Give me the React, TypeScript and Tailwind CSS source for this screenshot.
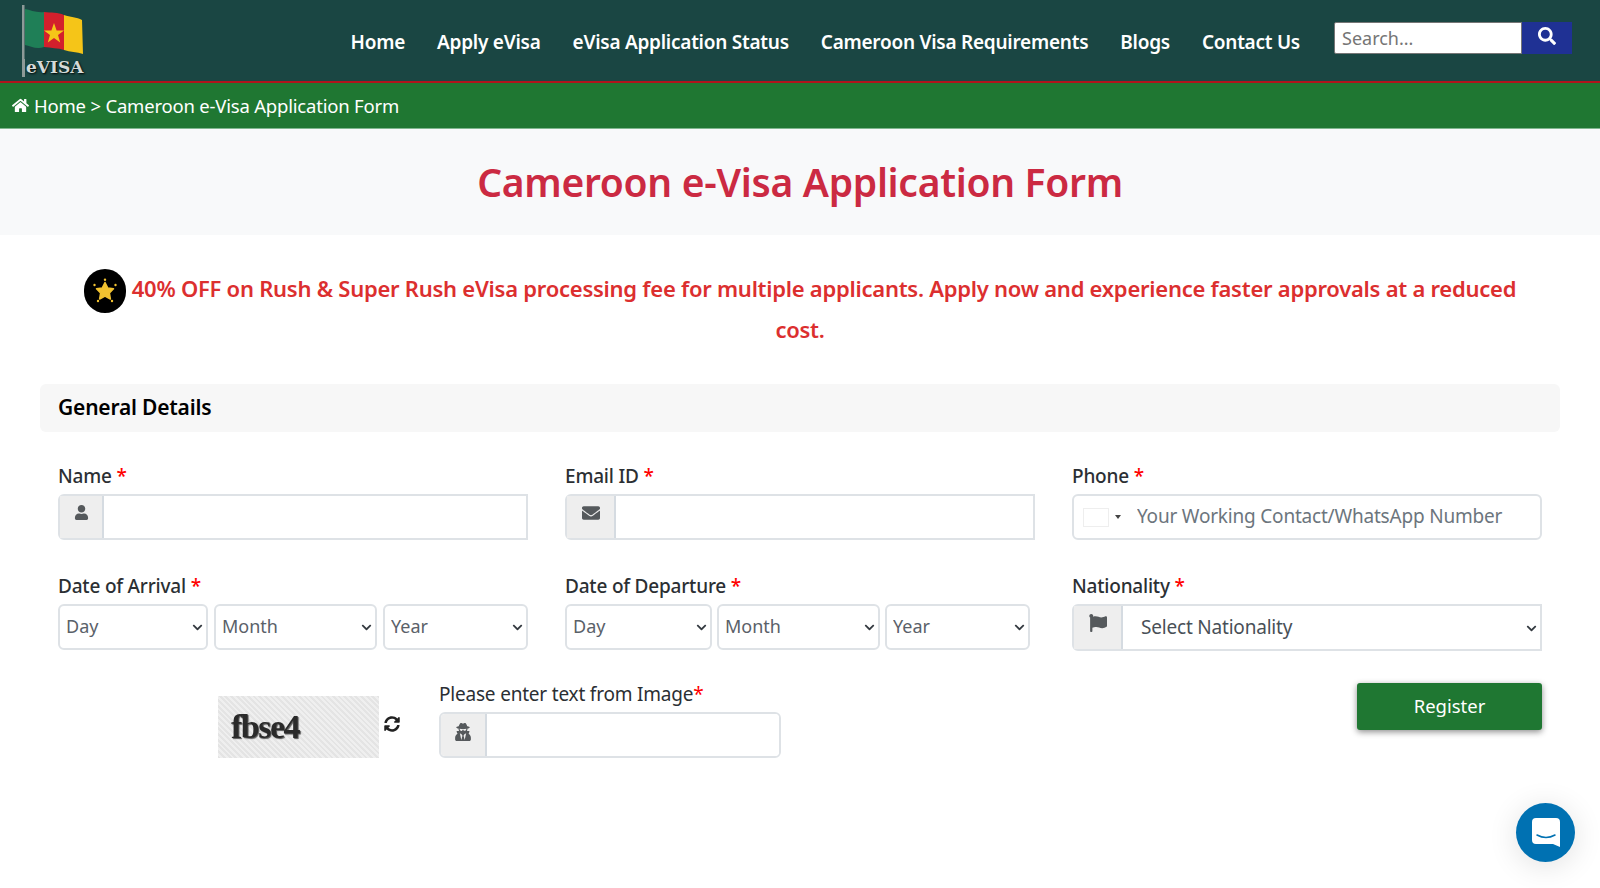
import React from 'react';
import { FaHome, FaSearch, FaUser, FaEnvelope, FaFlag, FaUserSecret, FaSyncAlt, FaChevronDown } from 'react-icons/fa';

const font = { fontFamily: '"Noto Sans", "Open Sans", sans-serif' };

const navItems = ['Home', 'Apply eVisa', 'eVisa Application Status', 'Cameroon Visa Requirements', 'Blogs', 'Contact Us'];

const Logo: React.FC = () => (
  <div className="relative w-[68px] h-[72px] shrink-0">
    <svg width="68" height="56" viewBox="0 0 68 56" fill="none">
      <rect x="0" y="0" width="2.5" height="56" fill="#8d9a98" />
      <path d="M3 4 C8 5 15 8 22 7 L22 42 C15 45 8 41 3 40 Z" fill="#1f7f57" />
      <path d="M22 7 C29 8 36 7 42 10 L42 45 C36 43 29 43 22 42 Z" fill="#d3202c" />
      <path d="M42 10 C48 12 55 12 60 15 L61 49 C55 47 48 47 42 45 Z" fill="#f5c518" />
      <path d="M32 18 L34.600 25.400 L42 25.400 L36 30 L38.200 37.400 L32 33 L25.800 37.400 L28 30 L22 25.400 L29.400 25.400 Z" fill="#f5c518" />
    </svg>
    <span
      className="absolute left-[4px] top-[52px] text-[17px] leading-[20px] font-bold text-[#d4dad8] [text-shadow:1px_1px_2px_#000]"
      style={{ fontFamily: '"DejaVu Serif", serif' }}
    >
      eVISA
    </span>
    <div className="absolute left-0 top-[54px] w-[2.500px] h-[18px] bg-[#8d9a98]" />
  </div>
);

const Label: React.FC<{ text: string }> = ({ text }) => (
  <label className="block text-[19px] leading-[24px] font-medium text-[#2b2f33] mb-[6px] tracking-[-0.2px]">
    {text} <span className="text-[#ff0000]">*</span>
  </label>
);

const Addon: React.FC<{ w: string; children: React.ReactNode }> = ({ w, children }) => (
  <div className={`${w} shrink-0 flex justify-center pt-[8px] bg-[#eeeeee] border-r-2 border-[#d5dbe1] text-[#55595c] text-[18px]`}>
    {children}
  </div>
);

const DateSelect: React.FC<{ label: string; className: string }> = ({ label, className }) => (
  <div className={`relative ${className}`}>
    <select className="w-full h-[46px] appearance-none bg-white border-2 border-[#dee2e6] rounded-[6px] pl-[6px] text-[18px] text-[#5a6169] outline-none">
      <option>{label}</option>
    </select>
    <FaChevronDown className="absolute right-[5px] top-[18px] text-[#343a40] text-[11px]" />
  </div>
);

const App: React.FC = () => {
  return (
    <div className="relative min-h-[888px] bg-white overflow-hidden" style={font}>
      <header className="h-[83px] bg-[#1a4643] border-b-2 border-[#b0141c] flex items-start pl-[22px] pr-[28px] pt-[5px]">
        <Logo />
        <nav className="ml-auto flex gap-[32px] pt-[24px] mr-[34px]">
          {navItems.map((item) => (
            <a key={item} className="text-white text-[19px] leading-[26px] font-semibold tracking-[-0.25px]">
              {item}
            </a>
          ))}
        </nav>
        <div className="flex h-[32px] mt-[17px]">
          <input
            placeholder="Search..."
            className="w-[188px] h-full bg-white border border-[#767676] rounded-l-[2px] px-[7px] text-[18px] text-black placeholder:text-[#757575] outline-none"
          />
          <button className="w-[50px] h-full bg-[#1f3194] text-white flex justify-center pt-[5px] text-[18px]">
            <FaSearch />
          </button>
        </div>
      </header>

      <div className="h-[46px] bg-[#1f7732] border-b border-[#7fb78f] flex items-center pl-[12px] gap-[5px] text-white text-[18.500px] tracking-[-0.2px]">
        <FaHome className="text-[17px]" />
        <span>Home &gt; Cameroon e-Visa Application Form</span>
      </div>

      <div className="h-[106px] bg-[#f8f9fa] flex items-center justify-center">
        <h1 className="text-[#cb2a42] text-[39px] leading-[48px] font-semibold tracking-[-0.3px]">Cameroon e-Visa Application Form</h1>
      </div>

      <div className="pt-[34px] text-center text-[#dc2f2f] text-[22px] leading-[33.600px] font-semibold tracking-[-0.25px]">
        <span className="inline-flex align-middle w-[42px] h-[44px] rounded-full bg-black items-center justify-center mr-[6px]">
          <svg width="26" height="26" viewBox="0 0 26 26">
            <path d="M13 4.500 L15.800 10 L21.500 10.800 L17.400 15 L18.400 21 L13 18.200 L7.600 21 L8.600 15 L4.500 10.800 L10.200 10 Z" fill="#f2c230" stroke="#f2c230" strokeWidth="1.500" strokeLinejoin="round" />
            <circle cx="13" cy="1.800" r="1.200" fill="#f2c230" />
            <circle cx="23.500" cy="7" r="1.200" fill="#f2c230" />
            <circle cx="2.500" cy="7" r="1.200" fill="#f2c230" />
            <circle cx="20" cy="23" r="1.200" fill="#f2c230" />
            <circle cx="6" cy="23" r="1.200" fill="#f2c230" />
          </svg>
        </span>
        40% OFF on Rush &amp; Super Rush eVisa processing fee for multiple applicants. Apply now and experience faster approvals at a reduced
        <br />
        cost.
      </div>

      <div className="mx-[40px] mt-[37px] px-[18px] h-[48px] bg-[#f7f7f7] rounded-[6px] flex items-center">
        <h2 className="text-[21px] font-semibold text-black tracking-[-0.2px]">General Details</h2>
      </div>

      <div className="mx-[40px] px-[18px] pt-[32px] grid grid-cols-3 gap-x-[37px] gap-y-[34px]">
        <div>
          <Label text="Name" />
          <div className="flex h-[46px] border-2 border-[#dee2e6] rounded-l-[6px]">
            <Addon w="w-[44px]"><FaUser className="text-[15px] mt-[1px]" /></Addon>
            <input className="flex-1 min-w-0 bg-white outline-none" />
          </div>
        </div>
        <div>
          <Label text="Email ID" />
          <div className="flex h-[46px] border-2 border-[#dee2e6] rounded-l-[6px]">
            <Addon w="w-[49px]"><FaEnvelope /></Addon>
            <input className="flex-1 min-w-0 bg-white outline-none" />
          </div>
        </div>
        <div>
          <Label text="Phone" />
          <div className="relative flex items-center h-[46px] border-2 border-[#dee2e6] rounded-[6px] pl-[63px]">
            <div className="absolute left-[9px] top-[12px] w-[26px] h-[19px] border border-[#eeeeee] bg-white" />
            <div className="absolute left-[41px] top-[19px] border-x-[3.500px] border-x-transparent border-t-[4px] border-t-[#444444]" />
            <input placeholder="Your Working Contact/WhatsApp Number" className="w-full min-w-0 bg-white text-[19px] placeholder:text-[#6c757d] outline-none tracking-[-0.2px]" />
          </div>
        </div>

        <div>
          <Label text="Date of Arrival" />
          <div className="flex gap-[6px]">
            <DateSelect label="Day" className="w-[150px]" />
            <DateSelect label="Month" className="w-[163px]" />
            <DateSelect label="Year" className="w-[145px]" />
          </div>
        </div>
        <div>
          <Label text="Date of Departure" />
          <div className="flex gap-[5px]">
            <DateSelect label="Day" className="w-[147px]" />
            <DateSelect label="Month" className="w-[163px]" />
            <DateSelect label="Year" className="w-[145px]" />
          </div>
        </div>
        <div>
          <Label text="Nationality" />
          <div className="relative flex h-[47px] border-2 border-[#dee2e6] rounded-l-[6px]">
            <Addon w="w-[49px]"><FaFlag /></Addon>
            <select className="flex-1 min-w-0 appearance-none bg-white pl-[18px] text-[19px] text-[#495057] outline-none tracking-[-0.2px]">
              <option>Select Nationality</option>
            </select>
            <FaChevronDown className="absolute right-[3px] top-[17px] text-[#343a40] text-[11px]" />
          </div>
        </div>
      </div>

      <div className="mx-[40px] pl-[178px] pr-[18px] pt-[32px] flex items-start">
        <div
          className="mt-[13px] w-[161px] h-[62px] flex items-center pl-[13px] bg-[#eaeaea] bg-[repeating-linear-gradient(45deg,#e4e4e4_0,#e4e4e4_2px,#efefef_2px,#efefef_4px)]"
        >
          <span
            className="text-[34px] leading-none font-bold text-[#2a2a2a] blur-[0.6px] tracking-[-1.5px] [text-shadow:1px_1px_1px_#555]"
            style={{ fontFamily: '"Liberation Serif", serif' }}
          >
            fbse4
          </span>
        </div>
        <FaSyncAlt className="ml-[5px] mt-[33px] w-[16px] h-[16px] text-[#222222]" />
        <div className="ml-[39px] w-[342px] -mt-[1px]">
          <label className="block text-[19px] leading-[24px] text-[#2b2f33] mb-[6px] tracking-[-0.2px]">
            Please enter text from Image<span className="text-[#ff0000]">*</span>
          </label>
          <div className="flex h-[46px] border-2 border-[#dee2e6] rounded-[6px] overflow-hidden">
            <Addon w="w-[46px]"><FaUserSecret className="mt-[1px]" /></Addon>
            <input className="flex-1 min-w-0 bg-white outline-none" />
          </div>
        </div>
        <button className="ml-auto w-[185px] h-[47px] bg-[#1f7732] text-white text-[18.500px] rounded-[3px] shadow-[0_2px_6px_rgba(0,0,0,0.45)]">
          Register
        </button>
      </div>

      <div className="absolute left-[1516px] top-[803px] w-[59px] h-[59px] rounded-full bg-[#0071b2] flex items-center justify-center shadow-[0_4px_30px_rgba(0,0,0,0.12)]">
        <svg width="28" height="30" viewBox="0 0 28 30">
          <path d="M4 0 H24 A4 4 0 0 1 28 4 V29 L21 26 H4 A4 4 0 0 1 0 22 V4 A4 4 0 0 1 4 0 Z" fill="#ffffff" />
          <path d="M5 17 Q14 22 23 17" fill="none" stroke="#0071b2" strokeWidth="1.500" strokeLinecap="round" />
        </svg>
      </div>
    </div>
  );
};

export default App;
